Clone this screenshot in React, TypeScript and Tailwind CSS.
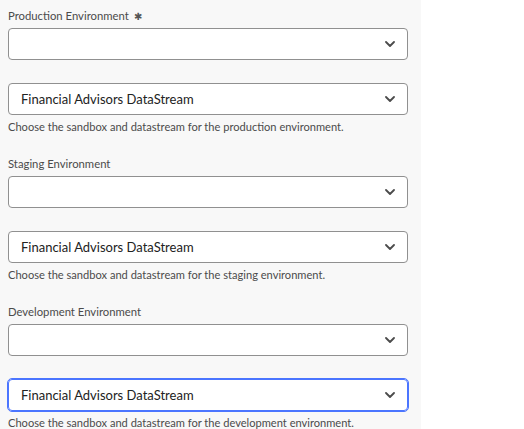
import React from "react";

const Chevron = () => (
  <svg width="10" height="6" viewBox="0 0 10 6" className="shrink-0">
    <path d="M1 1 L5 5 L9 1" fill="none" stroke="#4b4b4b" strokeWidth="1.8" strokeLinecap="round" strokeLinejoin="round" />
  </svg>
);

const Select = ({ value, focused }: { value?: string; focused?: boolean }) => (
  <div
    className={
      focused
        ? "flex h-8 items-center justify-between rounded-[4px] border border-[#4b75ff] bg-white pl-3 pr-3 outline outline-1 outline-[#4b75ff]"
        : "flex h-8 items-center justify-between rounded-[4px] border border-[#909090] bg-white pl-3 pr-3"
    }
  >
    <span className="text-[13px] leading-none text-[#222]">{value ?? ""}</span>
    <Chevron />
  </div>
);

const Section = ({ label, required, env }: { label: string; required?: boolean; env: string }) => (
  <div className="flex flex-col pt-2 pb-[13px]">
    <div className="flex h-4 items-center text-[11.3px] leading-4 text-[#4b4b4b]">
      {label}
      {required && <span className="ml-[5px] text-[10px] leading-none text-[#555]">✱</span>}
    </div>
    <div className="mt-1">
      <Select />
    </div>
    <div className="mt-[23px]">
      <Select value="Financial Advisors DataStream" focused={env === "development"} />
    </div>
    <div className="mt-1 text-[11.1px] leading-4 text-[#4b4b4b]">
      Choose the sandbox and datastream for the {env} environment.
    </div>
  </div>
);

export default function App() {
  return (
    <div className="flex h-[429px] w-[524px] overflow-hidden bg-white" style={{ fontFamily: "Lato, 'Noto Sans', sans-serif" }}>
      <div className="w-[421px] shrink-0 bg-[#f8f8f8] pl-2 pr-[13px]">
        <Section label="Production Environment" required env="production" />
        <Section label="Staging Environment" env="staging" />
        <Section label="Development Environment" env="development" />
      </div>
    </div>
  );
}
